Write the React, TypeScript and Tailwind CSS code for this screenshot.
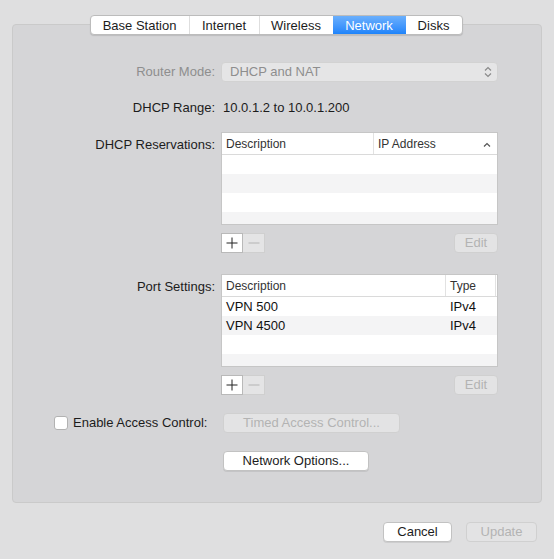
import React from "react"

const font = { fontFamily: '"Liberation Sans", Arial, sans-serif' }

const tabs = ["Base Station", "Internet", "Wireless", "Network", "Disks"]
const tabWidths = ["w-[98px]", "w-[70px]", "w-[74px]", "w-[73px]", "w-[56px]"]

function Tabs() {
  return (
    <div className="relative z-10 flex justify-center pr-[2px]">
      <div className="flex h-[20px] overflow-hidden rounded-[4px] border border-[#bcbcbc] bg-white shadow-[0_1px_1px_rgba(0,0,0,0.12)]">
        {tabs.map((t, i) => {
          const active = t === "Network"
          return (
            <div
              key={t}
              className={`${tabWidths[i]} flex items-center justify-center text-[13px] leading-none ${
                i > 0 && !active && tabs[i - 1] !== "Network" ? "border-l border-[#dedede]" : ""
              } ${active ? "bg-gradient-to-b from-[#6aaffc] to-[#1d84fb] text-white" : "text-[#1c1c1c]"}`}
            >
              {t}
            </div>
          )
        })}
      </div>
    </div>
  )
}

function Label({ children, gray, top }: { children: React.ReactNode; gray?: boolean; top?: boolean }) {
  return (
    <div
      className={`w-[202px] shrink-0 text-right text-[13px] ${gray ? "text-[#8e8e8e]" : "text-[#1c1c1c]"} ${
        top ? "pt-[3px]" : ""
      }`}
    >
      {children}
    </div>
  )
}

function PlusMinus() {
  return (
    <div className="flex h-[20px]">
      <div className="flex h-[20px] w-[22px] items-center justify-center border border-[#b9b9b9] bg-white">
        <svg width="12" height="12" viewBox="0 0 12 12">
          <path d="M6 0.5v11M0.5 6h11" stroke="#222" strokeWidth="1" />
        </svg>
      </div>
      <div className="flex h-[20px] w-[22px] items-center justify-center border border-l-0 border-[#cfcfcf] bg-[#e4e4e5]">
        <svg width="12" height="12" viewBox="0 0 12 12">
          <path d="M0.5 6h11" stroke="#b4b4b4" strokeWidth="1" />
        </svg>
      </div>
    </div>
  )
}

function DisabledButton({ children, className }: { children: React.ReactNode; className?: string }) {
  return (
    <div
      className={`flex h-[20px] items-center justify-center rounded-[4px] border border-[#d0d0d0] bg-[#e3e3e4] text-[13px] text-[#b3b3b3] ${className ?? ""}`}
    >
      {children}
    </div>
  )
}

function Button({ children, className }: { children: React.ReactNode; className?: string }) {
  return (
    <div
      className={`flex h-[20px] items-center justify-center rounded-[4px] border border-[#c2c2c2] bg-white text-[13px] text-[#1c1c1c] shadow-[0_1px_0_rgba(0,0,0,0.08)] ${className ?? ""}`}
    >
      {children}
    </div>
  )
}

function Table({
  cols,
  rows,
  chevron,
}: {
  cols: { label: string; w: string; divider?: boolean }[]
  rows: string[][]
  chevron?: boolean
}) {
  const bodyRows = [0, 1, 2, 3]
  return (
    <div className="h-[93px] w-[277px] overflow-hidden border border-[#c6c6c6] bg-white">
      <div className="relative flex h-[22px] items-center border-b border-[#dadada] text-[12px] text-[#333]">
        {cols.map((c) => (
          <div key={c.label} className={`${c.w} flex h-full items-center pl-[4px] ${c.divider ? "border-r border-[#e2e2e2]" : ""}`}>
            {c.label}
          </div>
        ))}
        {chevron && (
          <svg className="absolute right-[6px] top-[9px]" width="8" height="5" viewBox="0 0 8 5">
            <path d="M1 4.5L4 1.5L7 4.5" fill="none" stroke="#555" strokeWidth="1.2" />
          </svg>
        )}
      </div>
      {bodyRows.map((i) => (
        <div key={i} className={`flex h-[19px] items-center text-[13px] text-[#111] ${i % 2 ? "bg-[#f4f4f5]" : "bg-white"}`}>
          {rows[i] &&
            rows[i].map((cell, j) => (
              <div key={j} className={`${cols[j].w} pl-[4px]`}>
                {cell}
              </div>
            ))}
        </div>
      ))}
    </div>
  )
}

export default function App() {
  return (
    <div className="h-[559px] w-[554px] bg-[#dfdfe0] pt-[15px]" style={font}>
      <Tabs />
      <div className="mx-[12px] -mt-[11px] h-[479px] rounded-[4px] border border-[#cacaca] bg-[#d5d5d7] pt-[37px]">
        {/* Router mode */}
        <div className="flex h-[20px] items-center gap-[6px]">
          <Label gray>Router Mode:</Label>
          <div className="flex h-[20px] w-[277px] items-center justify-between rounded-[4px] border border-[#d2d2d2] bg-[#e5e5e6] pl-[8px] pr-[5px] text-[13px] text-[#8e8e8e]">
            <span>DHCP and NAT</span>
            <svg width="8" height="12" viewBox="0 0 8 12">
              <path d="M1 4.5L4 1.5L7 4.5M1 7.5L4 10.5L7 7.5" fill="none" stroke="#8a8a8a" strokeWidth="1.2" />
            </svg>
          </div>
        </div>

        {/* DHCP range */}
        <div className="mt-[16px] flex h-[19px] items-center gap-[8px] text-[13px] text-[#1c1c1c]">
          <Label>DHCP Range:</Label>
          <span>10.0.1.2 to 10.0.1.200</span>
        </div>

        {/* DHCP reservations */}
        <div className="mt-[15px] flex items-start gap-[6px]">
          <Label top>DHCP Reservations:</Label>
          <div>
            <Table
              cols={[
                { label: "Description", w: "w-[152px]", divider: true },
                { label: "IP Address", w: "w-[123px]" },
              ]}
              rows={[]}
              chevron
            />
            <div className="mt-[8px] flex items-center justify-between">
              <PlusMinus />
              <DisabledButton className="w-[44px]">Edit</DisabledButton>
            </div>
          </div>
        </div>

        {/* Port settings */}
        <div className="mt-[21px] flex items-start gap-[6px]">
          <Label top>Port Settings:</Label>
          <div>
            <Table
              cols={[
                { label: "Description", w: "w-[224px]", divider: true },
                { label: "Type", w: "w-[50px]", divider: true },
              ]}
              rows={[
                ["VPN 500", "IPv4"],
                ["VPN 4500", "IPv4"],
              ]}
            />
            <div className="mt-[8px] flex items-center justify-between">
              <PlusMinus />
              <DisabledButton className="w-[44px]">Edit</DisabledButton>
            </div>
          </div>
        </div>

        {/* Access control */}
        <div className="mt-[18px] flex h-[20px] items-center">
          <div className="ml-[41px] h-[14px] w-[14px] rounded-[3px] border border-[#b2b2b2] bg-white" />
          <span className="ml-[5px] w-[145px] text-[13px] text-[#1c1c1c]">Enable Access Control:</span>
          <DisabledButton className="ml-[5px] w-[177px]">Timed Access Control...</DisabledButton>
        </div>

        {/* Network options */}
        <div className="mt-[18px] flex">
          <Button className="ml-[210px] w-[146px]">Network Options...</Button>
        </div>
      </div>

      <div className="mr-[17px] mt-[19px] flex justify-end gap-[14px]">
        <Button className="w-[69px]">Cancel</Button>
        <DisabledButton className="w-[71px]">Update</DisabledButton>
      </div>
    </div>
  )
}
